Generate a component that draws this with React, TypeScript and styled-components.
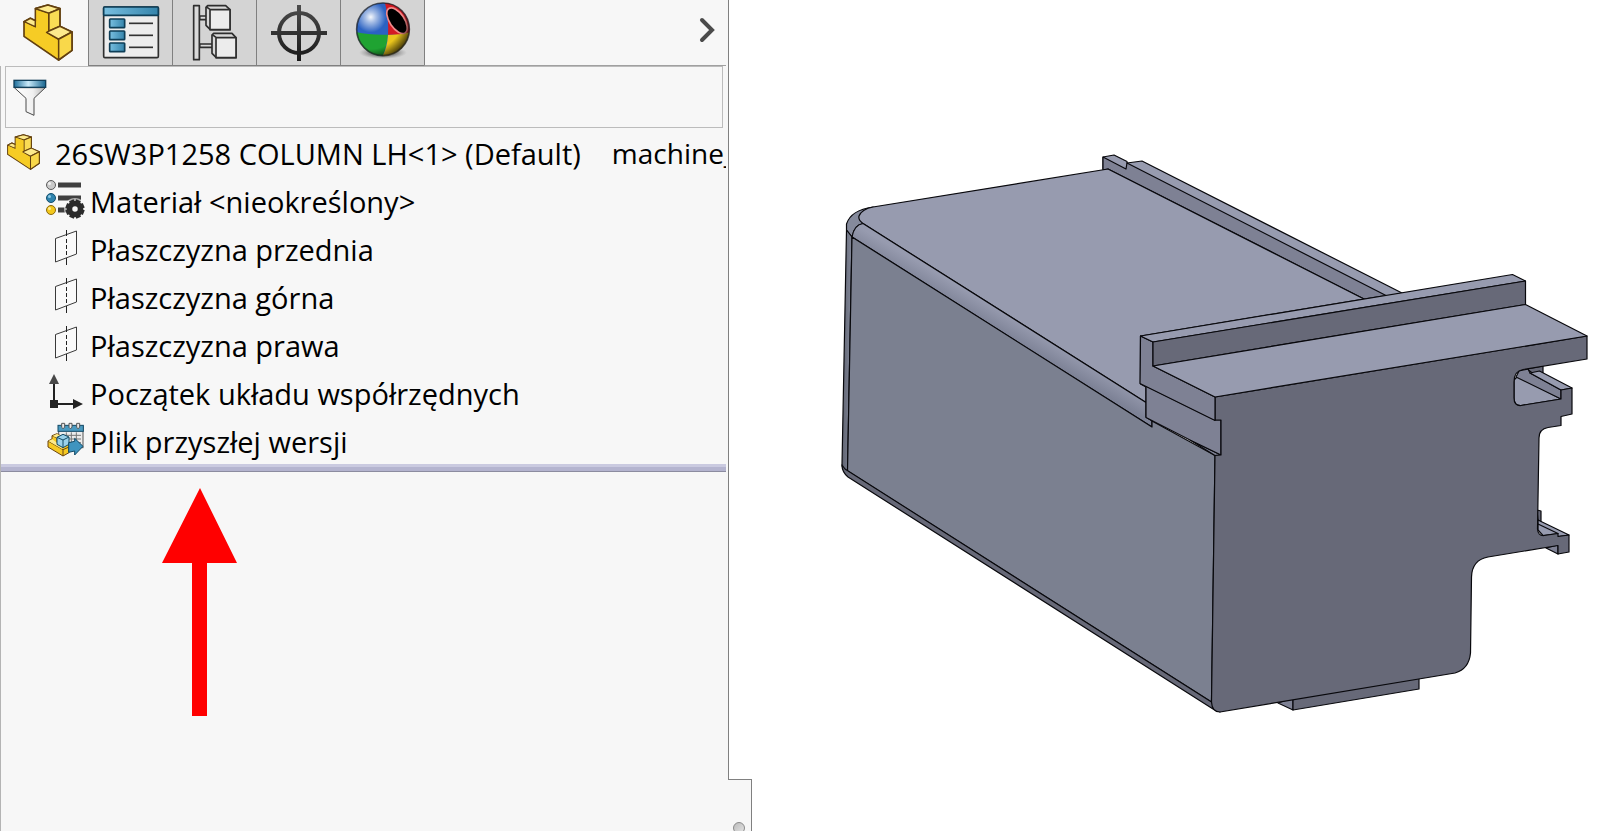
import React from "react";
import styled, { createGlobalStyle } from "styled-components";

const GlobalStyle = createGlobalStyle`
  *, *::before, *::after { box-sizing: border-box; }
  body {
    margin: 0;
    background: #ffffff;
    color: #000000;
    font-family: "Open Sans", "Noto Sans", sans-serif;
  }
`;

const Workspace = styled.main`
  display: flex;
  min-height: 100vh;
  overflow: hidden;
`;

const Panel = styled.aside`
  flex: 0 0 729px;
  min-width: 0;
  display: flex;
  flex-direction: column;
  background: #f7f7f7;
  border-right: 1px solid #808080;
`;

const TabBar = styled.div`
  display: flex;
  height: 66px;
  margin-right: 2px;
`;

const Tab = styled.button<{ $active?: boolean }>`
  display: flex;
  align-items: center;
  justify-content: center;
  width: ${(p) => (p.$active ? 88 : 84)}px;
  padding: ${(p) => (p.$active ? "0 0 2px 8px" : "0")};
  border: 0 solid #808080;
  border-left-width: ${(p) => (p.$active ? 0 : 1)}px;
  border-bottom-width: ${(p) => (p.$active ? 0 : 1)}px;
  background: ${(p) => (p.$active ? "#f7f7f7" : "#d4d4d4")};
`;

const TabStrip = styled.div`
  display: flex;
`;

const TabFill = styled.div`
  flex: 1;
  display: flex;
  justify-content: flex-end;
  border-left: 1px solid #808080;
  border-bottom: 1px solid #a0a0a0;
`;

const MoreButton = styled.button`
  display: flex;
  align-items: center;
  padding: 0 9px 6px;
  border: 0;
  background: transparent;
`;

const PanelBody = styled.div`
  flex: 1;
  border-left: 1px solid #b4b4b4;
`;

const FilterBox = styled.label`
  display: flex;
  align-items: center;
  height: 62px;
  margin: 0 5px 0 4px;
  padding: 2px 0 0 7px;
  border: 1px solid #bcbcbc;
`;

const FilterInput = styled.input`
  flex: 1;
  min-width: 0;
  height: 48px;
  border: 0;
  outline: 0;
  background: transparent;
  font: inherit;
  font-size: 29px;
`;

const Tree = styled.ul`
  margin: 0 2px 0 0;
  padding: 0;
  list-style: none;
`;

const TreeItem = styled.li<{ $root?: boolean }>`
  display: flex;
  align-items: center;
  gap: ${(p) => (p.$root ? 15 : 5)}px;
  height: 48px;
  padding-left: ${(p) => (p.$root ? 6 : 44)}px;
  overflow: hidden;

  > * {
    flex-shrink: 0;
  }
`;

const Label = styled.span`
  padding-top: 3px;
  font-size: 29px;
  line-height: 45px;
  white-space: nowrap;
`;

const Document = styled(Label)`
  margin-left: 16px;
  font-size: 28px;
`;

const RollbackBar = styled.div`
  height: 8px;
  margin-right: 2px;
  background: #b4b4cf;
  border-top: 3px solid #cacae0;
  border-bottom: 1px solid #8c8ca0;
`;

const Pointer = styled.svg`
  display: block;
  margin: 16px 0 0 161px;
`;

const Viewport = styled.section`
  position: relative;
  flex: 1;
  min-width: 0;
`;

const Corner = styled.div`
  position: absolute;
  left: -1px;
  bottom: 0;
  width: 24px;
  height: 52px;
  padding: 42px 5px 0;
  overflow: hidden;
  background: #f7f7f7;
  border: solid #808080;
  border-width: 1px 1px 0 0;
`;

const Knob = styled.div`
  width: 12px;
  height: 12px;
  border: 1px solid #8a8a8a;
  border-radius: 50%;
  background: linear-gradient(135deg, #bcbcbc, #e4e4e4);
`;

const Model = styled.svg`
  display: block;
  width: 100%;
  height: 100vh;
`;

const PartIcon = ({ width, height, line }: { width: number; height: number; line: number }) => (
  <svg width={width} height={height} viewBox="68 10 149 171" preserveAspectRatio="none" aria-hidden="true">
    <g stroke="#63400f" strokeWidth={line} strokeLinejoin="round">
      <path d="M71 63 90 53 105 60 105 24 142 13 178 24 178 77 214 94 214 149 174 178 71 107Z" fill="#f6cc25" />
      <path d="M71 63 90 53 105 60V79Z" fill="#fdea8c" />
      <path d="M105 24 142 13 178 24 145 38Z" fill="#fdea8c" />
      <path d="M145 38 178 24V77L145 92Z" fill="#f9dc55" />
      <path d="M137 95 178 77 214 94 174 116Z" fill="#fdea8c" />
      <path d="M174 116 214 94V149L174 178Z" fill="#f9d84a" />
    </g>
    <path d="M107 62V82L74 66V104L171 172V119L136 97V94L142 90V40L108 29V64Z" fill="#f6cc25" />
  </svg>
);

const PropertiesIcon = () => (
  <svg width="58" height="54" viewBox="306 17 174 162" aria-hidden="true">
    <defs>
      <linearGradient id="propBlue" x2="1">
        <stop stopColor="#79bfe0" />
        <stop offset="1" stopColor="#3484ab" />
      </linearGradient>
    </defs>
    <rect x="311" y="20" width="164" height="152" rx="4" fill="#ededed" stroke="#2f2f2f" strokeWidth="5" />
    <rect x="311" y="20" width="164" height="25" rx="2" fill="url(#propBlue)" stroke="#0e3e57" strokeWidth="5" />
    {[56, 92, 128].map((y) => (
      <g key={y}>
        <rect x="329" y={y} width="45" height="26" rx="2" fill="url(#propBlue)" stroke="#0e3e57" strokeWidth="5" />
        <path d={`M387 ${y + 13}H459`} stroke="#333" strokeWidth="5" />
      </g>
    ))}
  </svg>
);

const ConfigIcon = () => (
  <svg width="46" height="58" viewBox="577 10 138 174" aria-hidden="true">
    <g fill="#d9d9d9" stroke="#2e2e2e" strokeWidth="5" strokeLinejoin="round">
      <path d="M600 46H624V57H600ZM600 130H642V140H600Z" />
      <path d="M582 15H599V177H582Z" />
      <path d="M619 20 624 15H678L691 27V87H632L619 74Z" />
      <path d="M619 18 632 27M631 27H691V87H631Z" fill="#ececec" />
      <path d="M637 103 642 98H697L709 111V171H650L637 158Z" />
      <path d="M637 101 650 111M649 111H709V171H649Z" fill="#ececec" />
    </g>
  </svg>
);

const TargetIcon = () => (
  <svg width="56" height="56" viewBox="0 0 56 56" aria-hidden="true">
    <defs>
      <linearGradient id="steel" gradientUnits="userSpaceOnUse" x1="0" y1="0" x2="0" y2="56">
        <stop stopColor="#4c4c4c" />
        <stop offset="1" stopColor="#181818" />
      </linearGradient>
    </defs>
    <circle cx="28" cy="28" r="20" fill="none" stroke="url(#steel)" strokeWidth="4" />
    <path d="M26 0H30V26H56V30H30V56H26V30H0V26H26Z" fill="url(#steel)" />
  </svg>
);

const AppearanceIcon = () => (
  <svg width="58" height="62" viewBox="312 4 174 186" aria-hidden="true">
    <defs>
      <clipPath id="ball">
        <circle cx="399" cy="86" r="80" />
      </clipPath>
      <radialGradient id="shine" cx=".27" cy=".27" r=".8">
        <stop stopColor="#fff" stopOpacity=".95" />
        <stop offset=".12" stopColor="#fff" stopOpacity=".6" />
        <stop offset=".36" stopColor="#fff" stopOpacity="0" />
        <stop offset=".75" stopColor="#000" stopOpacity="0" />
        <stop offset="1" stopColor="#000" stopOpacity=".65" />
      </radialGradient>
      <radialGradient id="ballShadow">
        <stop offset=".5" stopColor="#555" stopOpacity=".7" />
        <stop offset="1" stopColor="#888" stopOpacity="0" />
      </radialGradient>
    </defs>
    <ellipse cx="399" cy="156" rx="72" ry="19" fill="url(#ballShadow)" />
    <g clipPath="url(#ball)">
      <rect x="316" y="4" width="166" height="166" fill="#2b62c2" />
      <path d="M318 94Q360 104 414 102Q410 140 396 170H316Z" fill="#1fa332" />
      <path d="M414 102Q450 101 482 92V170H396Q412 140 414 102Z" fill="#eac51c" />
      <path d="M404 4H482V94Q450 102 414 102Q417 50 404 4Z" fill="#d41a24" />
      <ellipse cx="441" cy="60" rx="22" ry="44" transform="rotate(-34 441 60)" fill="#000" stroke="#f08a8a" strokeWidth="5" />
      <circle cx="399" cy="86" r="80" fill="url(#shine)" />
    </g>
    <circle cx="399" cy="86" r="79" fill="none" stroke="#222" strokeOpacity=".7" strokeWidth="5" />
  </svg>
);

const ChevronIcon = () => (
  <svg width="18" height="28" viewBox="0 0 18 28" aria-hidden="true">
    <path d="M3 4 13 14 3 24" fill="none" stroke="#4b4b4b" strokeWidth="4" strokeLinecap="round" />
  </svg>
);

const FilterIcon = () => (
  <svg width="34" height="38" viewBox="38 238 102 114" aria-hidden="true">
    <defs>
      <linearGradient id="funnelTop" x2="1">
        <stop stopColor="#1b6c99" />
        <stop offset=".45" stopColor="#c9eafa" />
        <stop offset="1" stopColor="#17658f" />
      </linearGradient>
      <linearGradient id="funnelBody" x2="1">
        <stop stopColor="#ffffff" />
        <stop offset=".6" stopColor="#f0f0f0" />
        <stop offset="1" stopColor="#b4b4b4" />
      </linearGradient>
    </defs>
    <path d="M42 264H135L101 296V347L77 336V296Z" fill="url(#funnelBody)" stroke="#4a4a4a" strokeWidth="3" />
    <rect x="41" y="242" width="95" height="21" fill="url(#funnelTop)" stroke="#123f5a" strokeWidth="4" />
  </svg>
);

const MaterialIcon = () => (
  <svg width="40" height="40" viewBox="0 0 40 40" aria-hidden="true">
    <path d="M13 5H36M13 18H36M13 30H22" stroke="#404040" strokeWidth="5" />
    <circle cx="6" cy="5" r="4.5" fill="#c9c9c9" stroke="#5c5c5c" />
    <circle cx="6" cy="18" r="4.5" fill="#2f83ad" stroke="#14506f" />
    <circle cx="6" cy="30" r="4.5" fill="#f3c81c" stroke="#8b6a10" />
    <circle cx="4.500" cy="3.500" r="1.500" fill="#f1f1f1" />
    <circle cx="4.500" cy="16.500" r="1.500" fill="#8fcbe6" />
    <circle cx="4.500" cy="28.500" r="1.500" fill="#fdec99" />
    <circle cx="30" cy="29" r="11" fill="#f7f7f7" fillOpacity=".6" />
    <circle cx="30" cy="29" r="5.500" fill="none" stroke="#2b2b2b" strokeWidth="5.500" />
    {[0, 45, 90, 135, 180, 225, 270, 315].map((a) => (
      <path key={a} d="M27.500 19.500H32.500V23H27.500Z" transform={`rotate(${a + 22} 30 29)`} fill="#2b2b2b" />
    ))}
  </svg>
);

const PlaneIcon = () => (
  <svg width="40" height="36" viewBox="0 0 40 36" aria-hidden="true">
    <path d="M10.500 8.500 31.500 1V24L10.500 32Z" fill="#fafafa" stroke="#3a3a3a" />
    <path d="M21.500 0V6M21.500 9V13M21.500 15V19M21.500 21V25M21.500 28V35" stroke="#222" />
  </svg>
);

const OriginIcon = () => (
  <svg width="40" height="36" viewBox="0 0 40 36" aria-hidden="true">
    <path d="M9 6V30H30" fill="none" stroke="#222" strokeWidth="2" />
    <path d="M9 0 14 10H4Z" fill="#484848" />
    <path d="M5 26H13V34H5ZM28 25 38 30 28 35Z" fill="#222" />
  </svg>
);

const FutureIcon = () => (
  <svg width="40" height="36" viewBox="136 171 120 108" aria-hidden="true">
    <rect x="177" y="184" width="73" height="64" fill="#ececec" stroke="#555" strokeWidth="3" />
    <path d="M186 211H244M186 222H244M186 233H244M200 202V242M215 202V242M230 202V242" stroke="#777" strokeWidth="3" />
    <rect x="175" y="181" width="76" height="18" fill="#4b9ac0" stroke="#124a66" strokeWidth="3" />
    <path d="M186 175H195V187L190 191 186 187ZM208 175H217V187L212 191 208 187ZM231 175H240V187L235 191 231 187Z" fill="#e9e9e9" stroke="#555" strokeWidth="3" />
    <path d="M145 228 157 222V212L172 206 189 216 208 230V263L190 273 145 246Z" fill="#f6c922" stroke="#6b4510" strokeWidth="3" />
    <path d="M145 228 190 254V273M190 254 208 246M157 212 172 219V240" fill="none" stroke="#6b4510" strokeWidth="3" />
    <path d="M159 213 172 207 183 212 172 218ZM146 228 158 223 170 232 190 249 186 251Z" fill="#fdea8c" />
    <path d="M172 217 190 208 208 216V238L190 248 172 238Z" fill="#9ad1ea" stroke="#124a66" strokeWidth="3" />
    <path d="M172 217 190 225 208 216M190 225V248" fill="none" stroke="#124a66" strokeWidth="3" />
    <path d="M207 233 225 229V220L250 244 225 270V258L207 262Z" fill="#3f94bf" stroke="#124a66" strokeWidth="3" />
  </svg>
);

const features = [
  { icon: MaterialIcon, name: "Materiał <nieokreślony>" },
  { icon: PlaneIcon, name: "Płaszczyzna przednia" },
  { icon: PlaneIcon, name: "Płaszczyzna górna" },
  { icon: PlaneIcon, name: "Płaszczyzna prawa" },
  { icon: OriginIcon, name: "Początek układu współrzędnych" },
  { icon: FutureIcon, name: "Plik przyszłej wersji" },
];

const top = "#979baf";
const side = "#7e8194";
const face = "#7b8090";
const front = "#676978";

const ColumnModel = () => (
  <Model viewBox="729 0 887 831" role="img" aria-label="26SW3P1258 COLUMN LH">
    <defs>
      <linearGradient id="fillet" gradientUnits="userSpaceOnUse" x1="1000" y1="310" x2="990" y2="327">
        <stop stopColor={top} />
        <stop offset="1" stopColor="#7d8296" />
      </linearGradient>
      <linearGradient id="edge" x2="1">
        <stop stopColor="#606472" />
        <stop offset="1" stopColor="#838899" />
      </linearGradient>
    </defs>
    <g stroke="#08080c" strokeWidth="1.200" strokeLinejoin="round" strokeLinecap="round">
      <path d="M1103 169V157L1114 155 1127 161.500V163L1142 161 1402 293 1386 297 1364 299Z" fill={top} />
      <path d="M1103 157 1126 169 1127 163 1386 295.500 1364 299 1108 169 1103 170Z" fill={side} />
      <path d="M846.500 230V224Q851 210 873 207L880 215 863 223.500Q854 225 852 237Z" fill="#858a9c" />
      <path d="M863 223.500Q858 220 859 216Q862 209 873 207L1108 169 1364 299 1140.500 336V384L1146 387V402.500Z" fill={top} />
      <path d="M863 223.500 1146 402.500V417L1152 421V427L852 237Q854 225 863 223.500Z" fill="url(#fillet)" />
      <path d="M846.500 230 852 237 847.500 473Q842 469 842 465Z" fill="url(#edge)" />
      <path d="M852 237 1152 427V421L1215 455.500 1211.500 702 847.500 471Z" fill={face} />
      <path d="M842 465Q842 472 848 477L1213 709 1220 712 1211.500 702 845 469Z" fill={front} />
      <path d="M1190 440 1221 455 1215 455.500Z" fill={side} />
      <path d="M1146 386 1215 420H1221V455L1190 440 1146 417.500Z" fill={side} />
      <path d="M1278 703 1293 710V698Z" fill={side} />
      <path d="M1293 699V710L1419 689V678Z" fill={front} />
      <path d="M1527 369 1543 366V373L1535 375Z" fill={front} />
      <path d="M1514 380 1518 376 1561 399 1521 405.500Q1514 406 1514 398Z" fill={top} />
      <path d="M1516 377 1519 371 1528 369 1530 373 1561 390V399Z" fill={side} />
      <path d="M1530 373 1539.500 371 1572 388 1561 390Z" fill={top} />
      <path d="M1537 510 1541 511V522L1538 520Z" fill={front} />
      <path d="M1538 520 1569 535 1558 536.500 1543 535.500 1538 530Z" fill={top} />
      <path d="M1538 524 1558 533.500 1543 535.500" fill="none" />
      <path d="M1546 548 1558 554V545Z" fill={side} />
      <path
        d="M1215 397 1587 336V359L1523 369.500Q1514 371 1514 382V398Q1514 406 1521 405.500L1561 399V390L1572 388V414L1561 416.500V425.500L1548 427.500Q1539 429 1539 438L1537.500 529Q1538 536 1544 535.500L1558 533.500V536.500L1569 535V552L1558 554V545.500L1488 557Q1472 560 1471.500 577L1470.500 653Q1469 669 1455 673L1220 712Q1212 712 1211.500 702L1215 455.500 1221 455V420H1215Z"
        fill={front}
      />
      <path d="M1140.500 336 1153 342V366L1215 397V420.500L1140 383.500Z" fill={side} />
      <path d="M1140.500 336 1512.500 274.500 1525.500 281 1153 342Z" fill={top} />
      <path d="M1153 342 1525.500 281V304.500L1153 366Z" fill={front} />
      <path d="M1153 366 1525.500 304.500 1587 336 1215 397Z" fill={top} />
    </g>
  </Model>
);

export default function App() {
  return (
    <>
      <GlobalStyle />
      <Workspace>
        <Panel>
          <TabBar>
            <TabStrip role="tablist">
              <Tab $active role="tab" aria-selected="true" aria-label="FeatureManager">
                <PartIcon width={50} height={57} line={5} />
              </Tab>
              <Tab role="tab" aria-selected="false" aria-label="PropertyManager">
                <PropertiesIcon />
              </Tab>
              <Tab role="tab" aria-selected="false" aria-label="ConfigurationManager">
                <ConfigIcon />
              </Tab>
              <Tab role="tab" aria-selected="false" aria-label="DimXpertManager">
                <TargetIcon />
              </Tab>
              <Tab role="tab" aria-selected="false" aria-label="DisplayManager">
                <AppearanceIcon />
              </Tab>
            </TabStrip>
            <TabFill>
              <MoreButton aria-label="More tabs">
                <ChevronIcon />
              </MoreButton>
            </TabFill>
          </TabBar>
          <PanelBody>
            <FilterBox>
              <FilterIcon />
              <FilterInput type="text" aria-label="Filter" />
            </FilterBox>
            <Tree>
              <TreeItem $root>
                <PartIcon width={33} height={36} line={5} />
                <Label>{"26SW3P1258 COLUMN LH<1> (Default)"}</Label>
                <Document>machine_</Document>
              </TreeItem>
              {features.map(({ icon: Icon, name }) => (
                <TreeItem key={name}>
                  <Icon />
                  <Label>{name}</Label>
                </TreeItem>
              ))}
            </Tree>
            <RollbackBar />
            <Pointer width="76" height="228" viewBox="0 0 76 228" aria-hidden="true">
              <path d="M38 0 75 75H45V228H30V75H0Z" fill="#ff0000" />
            </Pointer>
          </PanelBody>
        </Panel>
        <Viewport>
          <ColumnModel />
          <Corner>
            <Knob />
          </Corner>
        </Viewport>
      </Workspace>
    </>
  );
}
